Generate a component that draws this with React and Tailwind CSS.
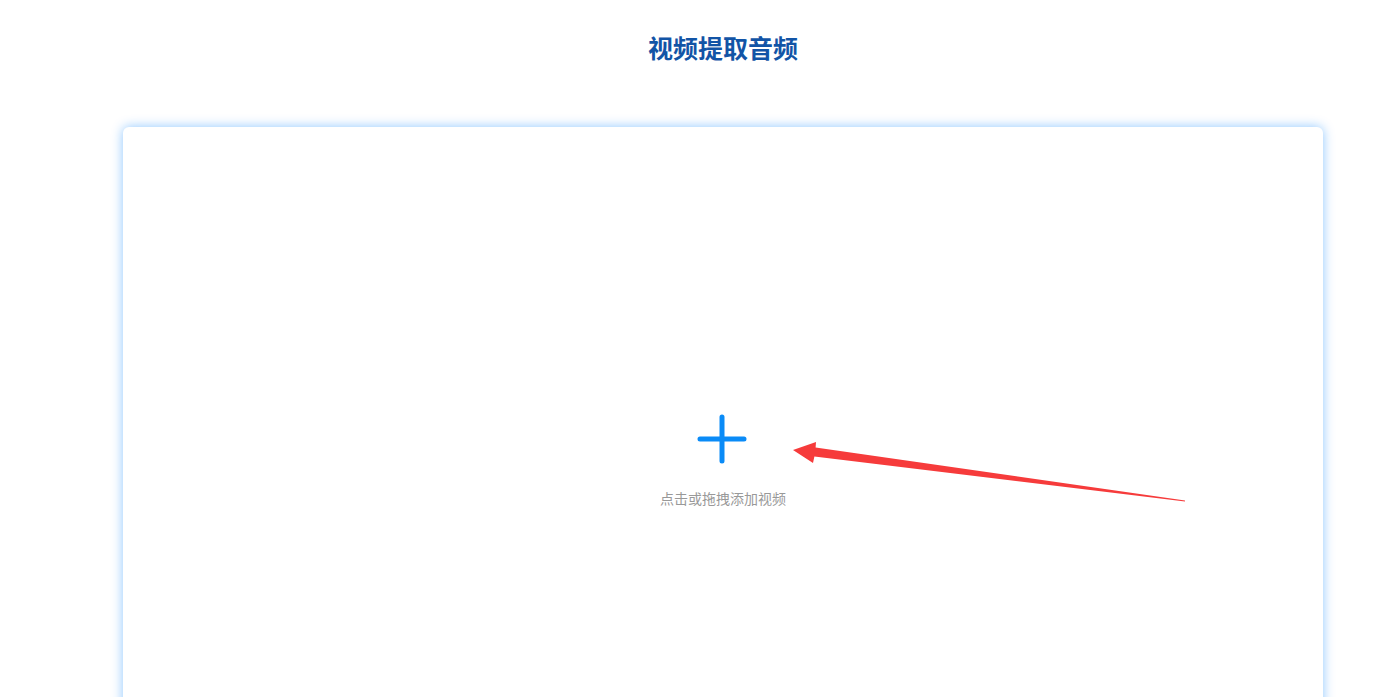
import { useState } from "react";

const PlusIcon = () => (
  <svg width="50" height="50" viewBox="0 0 50 50" fill="none">
    <path d="M25 3v44M3 25h44" stroke="#0a8bf7" strokeWidth="5" strokeLinecap="round" />
  </svg>
);

// 红色箭头标注，覆盖在卡片上
const ArrowMark = () => (
  <svg
    className="absolute left-0 top-0 pointer-events-none"
    width="1200"
    height="600"
    viewBox="0 0 1200 600"
  >
    <polygon
      points="670,323 693,315 692.6,320.5 1062,373.4 1062,374.6 691.4,329.5 690,336"
      fill="#f63b3b"
    />
  </svg>
);

export default function App() {
  const [file, setFile] = useState(null);

  return (
    <div
      className="h-[697px] bg-white overflow-hidden"
      style={{ fontFamily: '"Noto Sans", "Noto Sans CJK SC", sans-serif' }}
    >
      <div className="ml-[123px] w-[1200px]">
        <h1 className="pt-[34px] text-center text-[25px] leading-[28px] font-bold text-[#1254a6]">
          视频提取音频
        </h1>

        <label className="relative mt-[65px] block h-[640px] rounded-[6px] bg-white shadow-[0_0_12px_rgba(0,128,255,0.45)] cursor-pointer">
          <input
            type="file"
            accept="video/*"
            className="hidden"
            onChange={(e) => setFile(e.target.files?.[0] || null)}
          />
          <div className="flex flex-col items-center pt-[287px]">
            <div className="ml-[-2px]">
              <PlusIcon />
            </div>
            <p className="mt-[25px] text-[14px] leading-[20px] text-[#999999]">
              {file ? file.name : "点击或拖拽添加视频"}
            </p>
          </div>
          <ArrowMark />
        </label>
      </div>
    </div>
  );
}
